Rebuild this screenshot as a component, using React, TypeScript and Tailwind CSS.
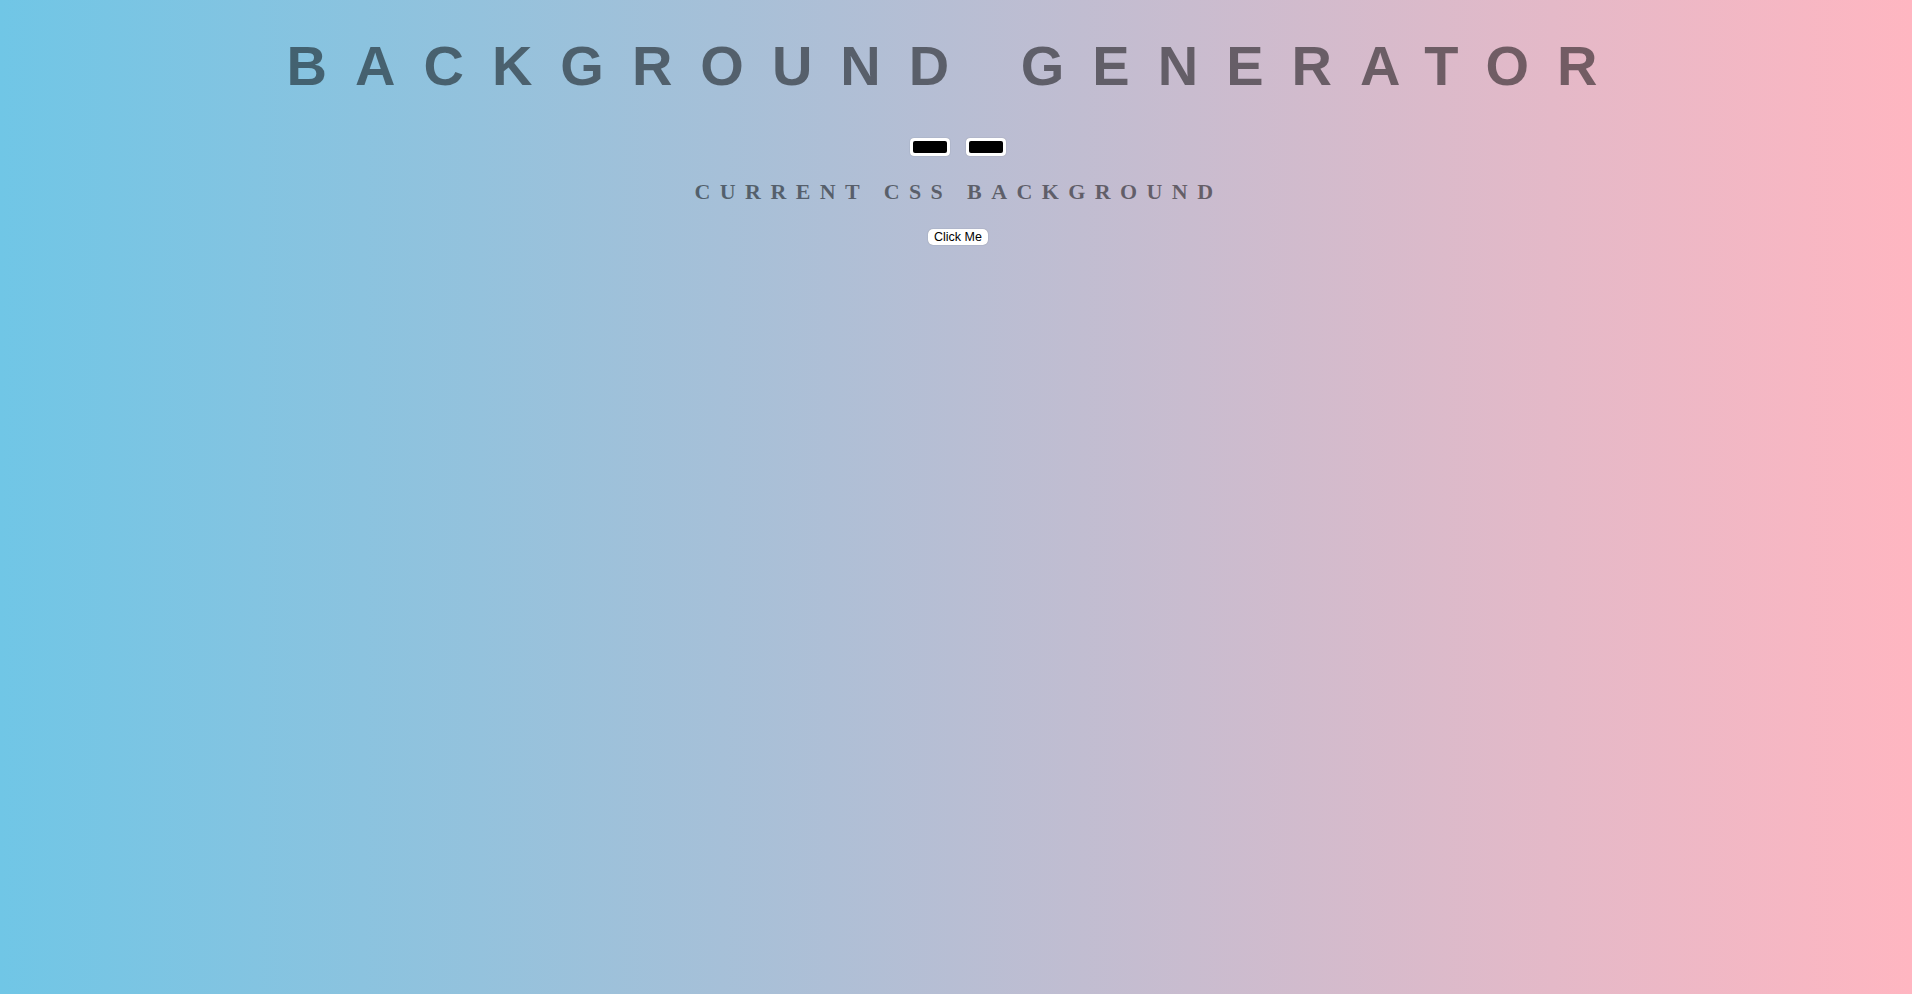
import { useState } from "react";

export default function App() {
  const [left, setLeft] = useState("#000000");
  const [right, setRight] = useState("#000000");

  return (
    <div className="flex min-h-screen flex-col items-center bg-[linear-gradient(to_right,#70c6e6,#ffb6c1)] pt-[34px] text-center text-black/50">
      <h1 className="w-full font-['Liberation_Sans',Arial,sans-serif] text-[56px] leading-[64px] font-bold tracking-[28px] uppercase">
        Background Generator
      </h1>
      <div className="mt-[40px] ml-[3px] flex gap-4">
        <input
          type="color"
          value={left}
          onChange={(e) => setLeft(e.target.value)}
          className="h-[18px] w-[40px] cursor-pointer appearance-none rounded-[4px] border-0 bg-white p-[3px] shadow-[0_0_1px_rgba(0,0,0,0.35)] [&::-webkit-color-swatch]:rounded-[2px] [&::-webkit-color-swatch]:border-0 [&::-webkit-color-swatch-wrapper]:p-0"
        />
        <input
          type="color"
          value={right}
          onChange={(e) => setRight(e.target.value)}
          className="h-[18px] w-[40px] cursor-pointer appearance-none rounded-[4px] border-0 bg-white p-[3px] shadow-[0_0_1px_rgba(0,0,0,0.35)] [&::-webkit-color-swatch]:rounded-[2px] [&::-webkit-color-swatch]:border-0 [&::-webkit-color-swatch-wrapper]:p-0"
        />
      </div>
      <h3 className="mt-[24px] ml-[5px] font-['Liberation_Serif','Times_New_Roman',serif] text-[22px] leading-[24px] font-bold tracking-[9.4px] uppercase">
        Current CSS Background
      </h3>
      <button className="mt-[25px] ml-[4px] h-[16px] w-[60px] rounded-[5px] bg-white font-['Liberation_Sans',Arial,sans-serif] text-[12.5px] leading-[16px] text-black shadow-[0_0_1px_rgba(0,0,0,0.4)]">
        Click Me
      </button>
    </div>
  );
}
